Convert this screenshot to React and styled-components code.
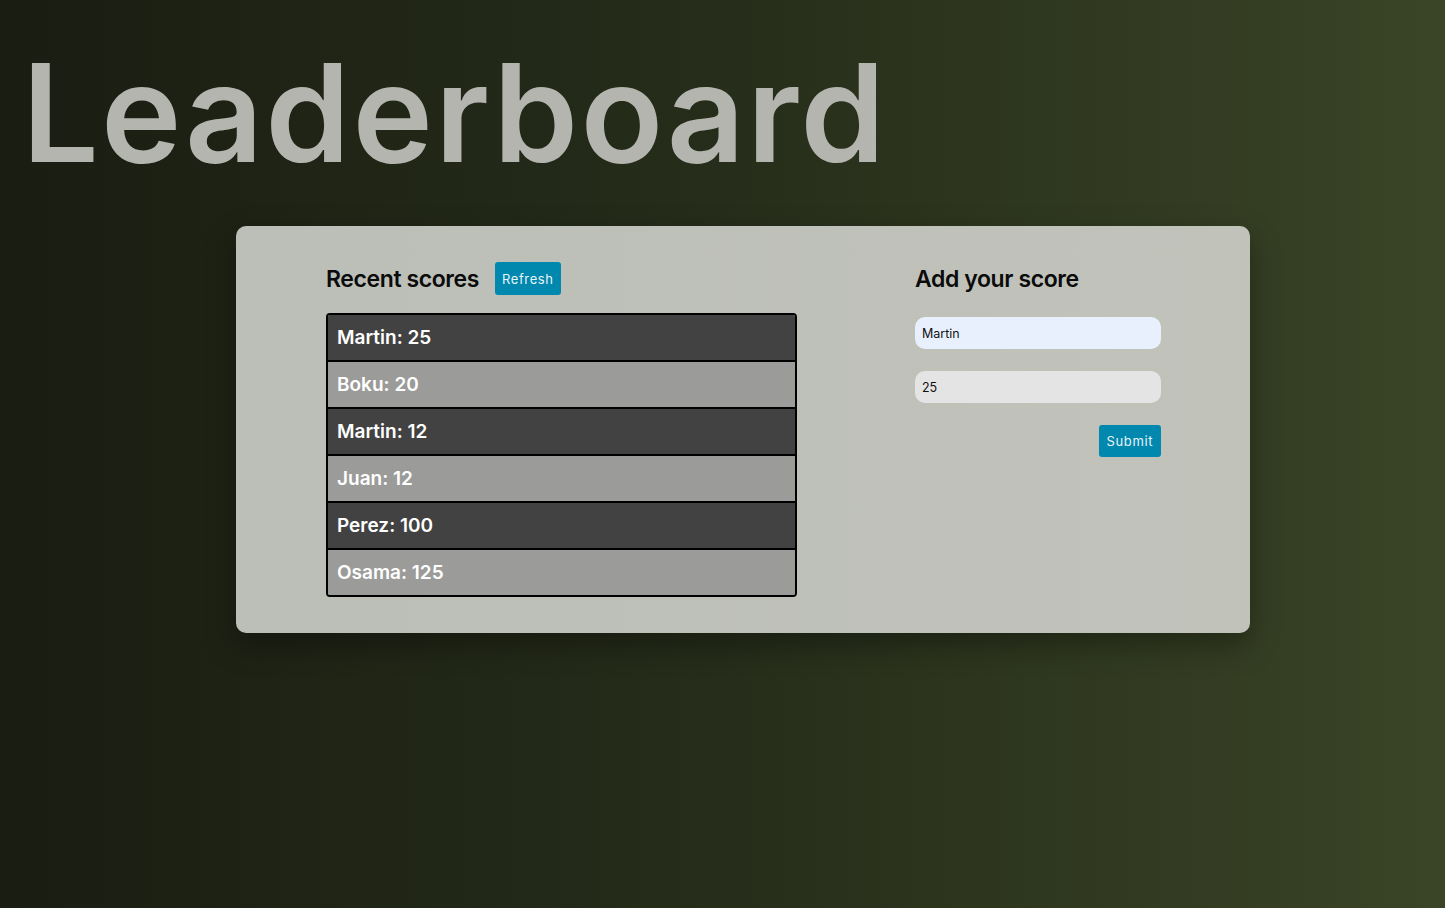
import React, { useState } from "react";
import styled, { createGlobalStyle } from "styled-components";

const GlobalStyle = createGlobalStyle`
  html, body {
    margin: 0;
    padding: 0;
  }
  body {
    min-height: 100vh;
    font-family: Inter, "Noto Sans", sans-serif;
    background: linear-gradient(to right, #1a1d12 0%, #262d1a 50%, #3a4426 100%);
  }
  * {
    box-sizing: border-box;
  }
`;

const Page = styled.div`
  min-height: 908px;
  padding: 45px 0 60px;
`;

const Title = styled.h1`
  margin: 0 0 0 22px;
  font-size: 136px;
  line-height: 1;
  font-weight: 600;
  letter-spacing: 2.2px;
  color: #b3b5ae;
`;

const Card = styled.main`
  display: flex;
  justify-content: space-between;
  align-items: flex-start;
  width: 1014px;
  margin: 45px 0 0 236px;
  padding: 36px 89px 36px 90px;
  border-radius: 10px;
  background: linear-gradient(to right, #bcbfb7, #c1c3bb);
  box-shadow: 0 12px 30px rgba(0, 0, 0, 0.35);
`;

const Scores = styled.section`
  width: 471px;
`;

const HeadRow = styled.div`
  display: flex;
  align-items: center;
  gap: 16px;
  margin-bottom: 18px;
`;

const Heading = styled.h2`
  margin: 0;
  font-size: 23px;
  font-weight: 600;
  letter-spacing: -0.4px;
  color: #0b0b0b;
`;

const Button = styled.button`
  height: 33px;
  padding: 0 7px;
  border: none;
  border-radius: 3px;
  background: #0088ae;
  color: #e9f4f8;
  font-family: inherit;
  font-size: 13px;
  letter-spacing: 0.6px;
  cursor: pointer;
`;

const List = styled.ul`
  margin: 0;
  padding: 0;
  list-style: none;
  border: 2px solid #000;
  border-radius: 4px;
  overflow: hidden;
`;

const Row = styled.li`
  height: ${(p) => (p.$first ? "45px" : "47px")};
  display: flex;
  align-items: center;
  padding-left: 9px;
  border-top: ${(p) => (p.$first ? "none" : "2px solid #000")};
  background: ${(p) => (p.$dark ? "#424242" : "#9b9b99")};
  color: #fff;
  font-size: 19px;
  font-weight: 600;
`;

const FormCol = styled.form`
  width: 246px;
  display: flex;
  flex-direction: column;
`;

const FormHeading = styled(Heading)`
  height: 33px;
  display: flex;
  align-items: center;
  margin-bottom: 22px;
`;

const Input = styled.input`
  height: 32px;
  margin-bottom: 22px;
  padding: 0 7px;
  border: none;
  border-radius: 10px;
  background: ${(p) => (p.$filled ? "#e8f0fe" : "#e4e4e4")};
  color: #111;
  font-family: inherit;
  font-size: 12.5px;
  outline: none;
`;

const SubmitButton = styled(Button)`
  align-self: flex-end;
  height: 32px;
  padding: 0 8px;
`;

const scores = [
  { user: "Martin", score: 25 },
  { user: "Boku", score: 20 },
  { user: "Martin", score: 12 },
  { user: "Juan", score: 12 },
  { user: "Perez", score: 100 },
  { user: "Osama", score: 125 },
];

const App = () => {
  const [name, setName] = useState("Martin");
  const [score, setScore] = useState("25");
  const onSubmit = (event) => {
    event.preventDefault();
  };
  return (
    <>
      <GlobalStyle />
      <Page>
        <Title>Leaderboard</Title>
        <Card>
          <Scores>
            <HeadRow>
              <Heading>Recent scores</Heading>
              <Button type="button">Refresh</Button>
            </HeadRow>
            <List>
              {scores.map((item, i) => (
                <Row key={i} $first={i === 0} $dark={i % 2 === 0}>
                  {item.user}: {item.score}
                </Row>
              ))}
            </List>
          </Scores>
          <FormCol onSubmit={onSubmit}>
            <FormHeading>Add your score</FormHeading>
            <Input
              $filled
              value={name}
              onChange={(e) => setName(e.target.value)}
            />
            <Input value={score} onChange={(e) => setScore(e.target.value)} />
            <SubmitButton type="submit">Submit</SubmitButton>
          </FormCol>
        </Card>
      </Page>
    </>
  );
};

export default App;
